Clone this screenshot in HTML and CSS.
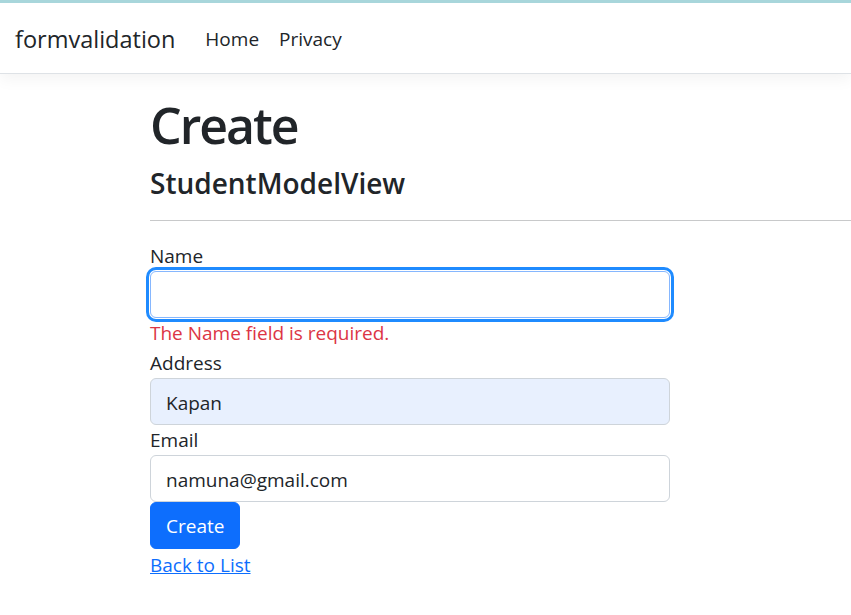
FILE: index.html
```html
<!DOCTYPE html>
<html lang="en">
<head>
<meta charset="utf-8">
<title>Create - formvalidation</title>
<link rel="stylesheet" href="styles.css">
</head>
<body>
<header class="topbar">
  <nav class="navbar">
    <a class="brand" href="#">formvalidation</a>
    <ul class="nav">
      <li><a class="nav-link" href="#">Home</a></li>
      <li><a class="nav-link" href="#">Privacy</a></li>
    </ul>
  </nav>
</header>
<main class="main">
  <h1 class="title">Create</h1>
  <h4 class="subtitle">StudentModelView</h4>
  <hr class="rule">
  <form class="form">
    <div class="group">
      <label class="label" for="name">Name</label>
      <input class="input input-focus" id="name" type="text" value="">
      <span class="error">The Name field is required.</span>
    </div>
    <div class="group">
      <label class="label" for="address">Address</label>
      <input class="input input-autofill" id="address" type="text" value="Kapan">
    </div>
    <div class="group">
      <label class="label" for="email">Email</label>
      <input class="input" id="email" type="text" value="namuna@gmail.com">
    </div>
    <div class="group">
      <button class="btn" type="button">Create</button>
    </div>
  </form>
  <div class="back"><a class="link" href="#">Back to List</a></div>
</main>
</body>
</html>
```

FILE: styles.css
```css
* { box-sizing: border-box; }
html, body { margin: 0; padding: 0; }
body {
  font-family: "Open Sans", "Noto Sans", "Liberation Sans", sans-serif;
  font-size: 19px;
  line-height: 1.5;
  color: #212529;
  background: #fff;
}
.topbar {
  border-top: 3px solid #a8d6db;
  background: #fff;
  border-bottom: 1px solid #dee2e6;
  box-shadow: 0 5px 15px rgba(0, 0, 0, 0.05);
}
.navbar {
  height: 70px;
  display: flex;
  align-items: center;
  padding: 3px 15px 0;
}
.brand {
  font-size: 23.5px;
  color: #212529;
  text-decoration: none;
  margin-right: 20px;
  line-height: 1.5;
}
.nav {
  list-style: none;
  margin: 0;
  padding: 0;
  display: flex;
}
.nav-link {
  display: block;
  padding: 0 10px;
  color: #212529;
  text-decoration: none;
  font-size: 19px;
}
.main {
  padding: 21px 0 0 150px;
}
.title {
  margin: 0;
  font-size: 50px;
  font-weight: 600;
  letter-spacing: -2px;
  line-height: 1.2;
}
.subtitle {
  margin: 12px 0 0;
  font-size: 28px;
  font-weight: 600;
  line-height: 1.2;
}
.rule {
  margin: 19px 0 20px;
  border: 0;
  border-top: 1px solid #c8c9ca;
}
.form { width: 520px; }
.group { display: flex; flex-direction: column; align-items: flex-start; }
.label { display: block; line-height: 30px; }
.input {
  display: block;
  width: 100%;
  height: 47px;
  padding: 9px 15px 5px;
  font: inherit;
  font-size: 19px;
  color: #212529;
  background: #fff;
  border: 1px solid #ced4da;
  border-radius: 6px;
  outline: none;
}
.input-focus {
  border-color: #86b7fe;
  box-shadow: 0 0 0 1px #fff, 0 0 0 4px #1f8bff;
}
.input-autofill { background: #e8f0fe; }
.error {
  color: #dc3545;
  line-height: 30px;
}
.btn {
  height: 47px;
  padding: 3px 15px 0;
  font: inherit;
  font-size: 19px;
  color: #fff;
  background: #0d6efd;
  border: 1px solid #0d6efd;
  border-radius: 6px;
}
.back { line-height: 30px; padding-top: 1px; }
.link { color: #0d6efd; text-decoration: underline; }
```
